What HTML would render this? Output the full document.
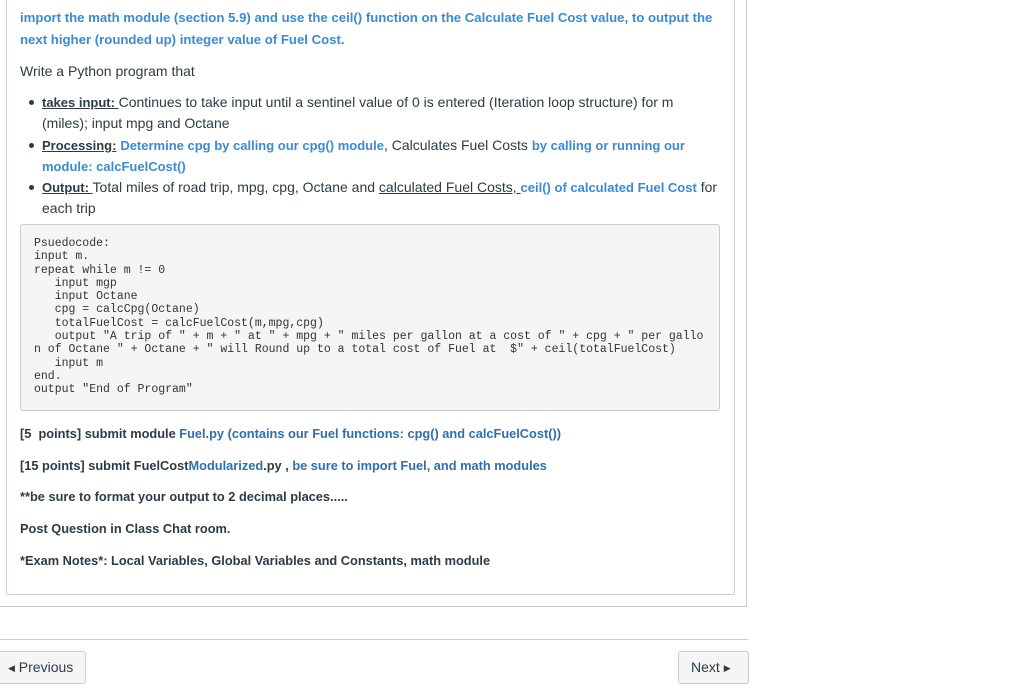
<!DOCTYPE html>
<html><head><meta charset="utf-8"><style>
body{margin:0;width:1024px;height:694px;overflow:hidden;background:#fff;font-family:"Liberation Sans",sans-serif;color:#2d3b45;position:relative}
.outer{position:absolute;left:-2px;top:-2px;width:749px;height:609px;border:1px solid #c7cdd1;box-sizing:border-box}
.inner{position:absolute;left:6px;top:-2px;width:729px;height:597px;border:1px solid #c7cdd1;border-top:none;box-sizing:border-box;border-radius:0 0 3px 3px}
.t{position:absolute;left:20px;font-size:14px;white-space:nowrap;line-height:21px}
.b{color:#3a8bd4;font-weight:bold;font-size:13px}
.b2{color:#2f6fae}
.u{text-decoration:underline;font-weight:bold;font-size:13px}
.dot{position:absolute;left:29px;width:5px;height:5px;border-radius:50%;background:#2d3b45}
.code{position:absolute;left:20px;top:224px;width:700px;height:187px;border:1px solid #c7cdd1;border-radius:3px;background:#f5f5f5;box-sizing:border-box}
pre{position:absolute;left:34px;top:237px;margin:0;font-family:"Liberation Mono",monospace;font-size:11.5px;line-height:13.3px;color:#333}
.bold{font-weight:bold;color:#2d3b45;font-size:12.8px}
.hr{position:absolute;left:0;top:639px;width:748px;height:1px;background:#c7cdd1}
.btn{position:absolute;top:651px;height:33px;border:1px solid #c7cdd1;border-radius:3px;background:#f5f5f5;font-size:14px;line-height:31px;box-sizing:border-box;color:#2d3b45}
</style></head><body>
<div class="outer"></div><div class="inner"></div>
<div class="t b" style="top:7px;font-size:13.2px">import the math module (section 5.9) and use the ceil() function on the Calculate Fuel Cost value, to output the</div>
<div class="t b" style="top:29px;font-size:13.2px">next higher (rounded up) integer value of Fuel Cost.</div>
<div class="t" style="top:61px">Write a Python program that</div>
<div class="dot" style="top:100px"></div>
<div class="t" style="left:42px;top:92px"><span class="u">takes input: </span> Continues to take input until a sentinel value of 0 is entered (Iteration loop structure) for m</div>
<div class="t" style="left:42px;top:113px">(miles); input mpg and Octane</div>
<div class="dot" style="top:143px"></div>
<div class="t" style="left:42px;top:135px"><span class="u">Processing:</span> <span class="b">Determine cpg by calling our cpg() module</span>, Calculates Fuel Costs <span class="b">by calling or running our</span></div>
<div class="t b" style="left:42px;top:156px">module: calcFuelCost()</div>
<div class="dot" style="top:185px"></div>
<div class="t" style="left:42px;top:177px"><span class="u">Output: </span> Total miles of road trip, mpg, cpg, Octane and <span style="text-decoration:underline">calculated Fuel Costs, </span><span class="b">ceil() of calculated Fuel Cost</span> for</div>
<div class="t" style="left:42px;top:198px">each trip</div>
<div class="code"></div>
<pre>Psuedocode:
input m.
repeat while m != 0
   input mgp
   input Octane
   cpg = calcCpg(Octane)
   totalFuelCost = calcFuelCost(m,mpg,cpg)
   output "A trip of " + m + " at " + mpg + " miles per gallon at a cost of " + cpg + " per gallo
n of Octane " + Octane + " will Round up to a total cost of Fuel at  $" + ceil(totalFuelCost)
   input m
end.
output "End of Program"</pre>
<div class="t bold" style="top:423px">[5&nbsp; points] submit module <span class="b2">Fuel.py (contains our Fuel functions: cpg() and calcFuelCost())</span></div>
<div class="t bold" style="top:455px">[15 points] submit FuelCost<span class="b2">Modularized</span>.py , <span class="b2">be sure to import Fuel, and math modules</span></div>
<div class="t bold" style="top:486px">**be sure to format your output to 2 decimal places.....</div>
<div class="t bold" style="top:518px">Post Question in Class Chat room.</div>
<div class="t bold" style="top:550px">*Exam Notes*: Local Variables, Global Variables and Constants, math module</div>
<div class="hr"></div>
<div class="btn" style="left:-3px;width:89px;padding-left:10px"><span style="font-size:9px;vertical-align:1px">&#9664;</span> Previous</div>
<div class="btn" style="left:678px;width:71px;padding-left:12px">Next <span style="font-size:9px;vertical-align:1px">&#9654;</span></div>
</body></html>
